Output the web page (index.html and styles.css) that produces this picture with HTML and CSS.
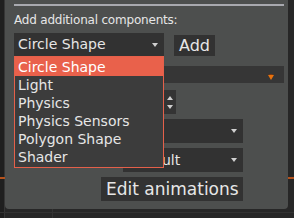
FILE: index.html
```html
<!DOCTYPE html>
<html lang="en">
  <head>
    <meta charset="UTF-8" />
    <meta name="viewport" content="width=device-width, initial-scale=1.0" />
    <title>Components</title>
    <link rel="stylesheet" href="styles.css">
  </head>
  <body>
    <div class="panel">
      <div class="rule"></div>
      <div class="label">Add additional components:</div>
      <div class="add-row">
        <div class="select">Circle Shape<span class="caret"></span></div>
        <button class="btn add">Add</button>
        <!-- opened list of the select above -->
        <ul class="menu">
          <li class="active">Circle Shape</li>
          <li>Light</li>
          <li>Physics</li>
          <li>Physics Sensors</li>
          <li>Polygon Shape</li>
          <li>Shader</li>
        </ul>
      </div>
      <div class="bar"><span class="warn"></span></div>
      <div class="num">
        <span class="spin"><i class="up"></i><i class="down"></i></span>
      </div>
      <div class="drop"><span></span><span class="caret"></span></div>
      <div class="drop"><span>Default</span><span class="caret"></span></div>
      <button class="btn edit">Edit animations</button>
    </div>
  </body>
</html>
```

FILE: styles.css
```css
html,
body {
  margin: 0;
  width: 294px;
  height: 218px;
  overflow: hidden;
}
body {
  font-family: "DejaVu Sans", Verdana, sans-serif;
  color: #e6e6e6;
  background-color: #272727;
  background-image:
    linear-gradient(to bottom, transparent 177px, #b5521c 177px, #b5521c 179px, transparent 179px),
    linear-gradient(to bottom, transparent 212px, #333 212px, #333 213px, transparent 213px),
    linear-gradient(to right, #1f1f1f 4px, #363636 4px, #363636 5px, transparent 5px),
    linear-gradient(to right, transparent 52px, #333 52px, #333 53px, transparent 53px);
}
.panel {
  box-sizing: border-box;
  width: 283px;
  height: 209px;
  margin-left: 5px;
  padding: 4px 4px 0 9px;
  background: #4d4f4e;
  border-radius: 0 0 4px 4px;
  display: flex;
  flex-direction: column;
  align-items: flex-start;
}
.rule {
  align-self: stretch;
  height: 2px;
  background: #a8a9af;
}
.label {
  margin-top: 7px;
  font-size: 12px;
  line-height: 14px;
  letter-spacing: -0.2px;
}
.add-row {
  position: relative;
  margin-top: 6px;
  display: flex;
  align-items: flex-end;
  gap: 10px;
}
.select {
  box-sizing: border-box;
  width: 150px;
  height: 23px;
  padding: 0 6px 0 4px;
  background: #323232;
  font-size: 14px;
  line-height: 23px;
  display: flex;
  justify-content: space-between;
  align-items: center;
}
.caret {
  width: 0;
  height: 0;
  border-left: 3px solid transparent;
  border-right: 3px solid transparent;
  border-top: 4px solid #d0d0d0;
}
.btn {
  border: 0;
  margin: 0;
  padding: 0 5px;
  background: #323232;
  color: #e6e6e6;
  font-family: inherit;
}
.add {
  height: 21px;
  font-size: 16px;
  line-height: 21px;
}
.menu {
  position: absolute;
  top: 23px;
  left: 0;
  box-sizing: border-box;
  width: 150px;
  margin: 0;
  padding: 0 0 1px;
  list-style: none;
  background: #3c3c3c;
  border: 1px solid #e4604a;
  font-size: 14px;
  line-height: 18px;
  z-index: 2;
}
.menu li {
  padding-left: 3px;
}
.menu .active {
  padding-top: 1px;
  background: #e9614b;
  color: #fff;
}
.bar {
  box-sizing: border-box;
  align-self: stretch;
  height: 17px;
  margin-top: 10px;
  padding-right: 10px;
  background: #363636;
  display: flex;
  justify-content: flex-end;
  align-items: center;
}
.warn {
  position: relative;
  width: 0;
  height: 0;
  border-top: 1px solid #8a3a08;
  border-left: 3px solid transparent;
  border-right: 3px solid transparent;
}
.warn::after {
  content: "";
  position: absolute;
  left: -3px;
  top: 0;
  border-left: 3px solid transparent;
  border-right: 3px solid transparent;
  border-top: 5px solid #e8720e;
}
.num {
  box-sizing: border-box;
  width: 53px;
  height: 24px;
  margin: 7px 0 0 109px;
  background: #343434;
  display: flex;
  justify-content: flex-end;
}
.spin {
  width: 13px;
  display: flex;
  flex-direction: column;
  justify-content: space-around;
  align-items: center;
  padding: 3px 0;
}
.spin i {
  width: 0;
  height: 0;
  border-left: 3px solid transparent;
  border-right: 3px solid transparent;
}
.spin .up {
  border-bottom: 4px solid #cfcfcf;
}
.spin .down {
  border-top: 4px solid #cfcfcf;
}
.drop {
  box-sizing: border-box;
  width: 120px;
  height: 24px;
  margin: 5px 0 0 109px;
  padding: 0 6px;
  background: #323232;
  font-size: 14px;
  line-height: 24px;
  display: flex;
  justify-content: space-between;
  align-items: center;
}
.edit {
  width: 142px;
  height: 24px;
  margin: 5px 0 0 87px;
  font-size: 17px;
  line-height: 24px;
  white-space: nowrap;
}
```
